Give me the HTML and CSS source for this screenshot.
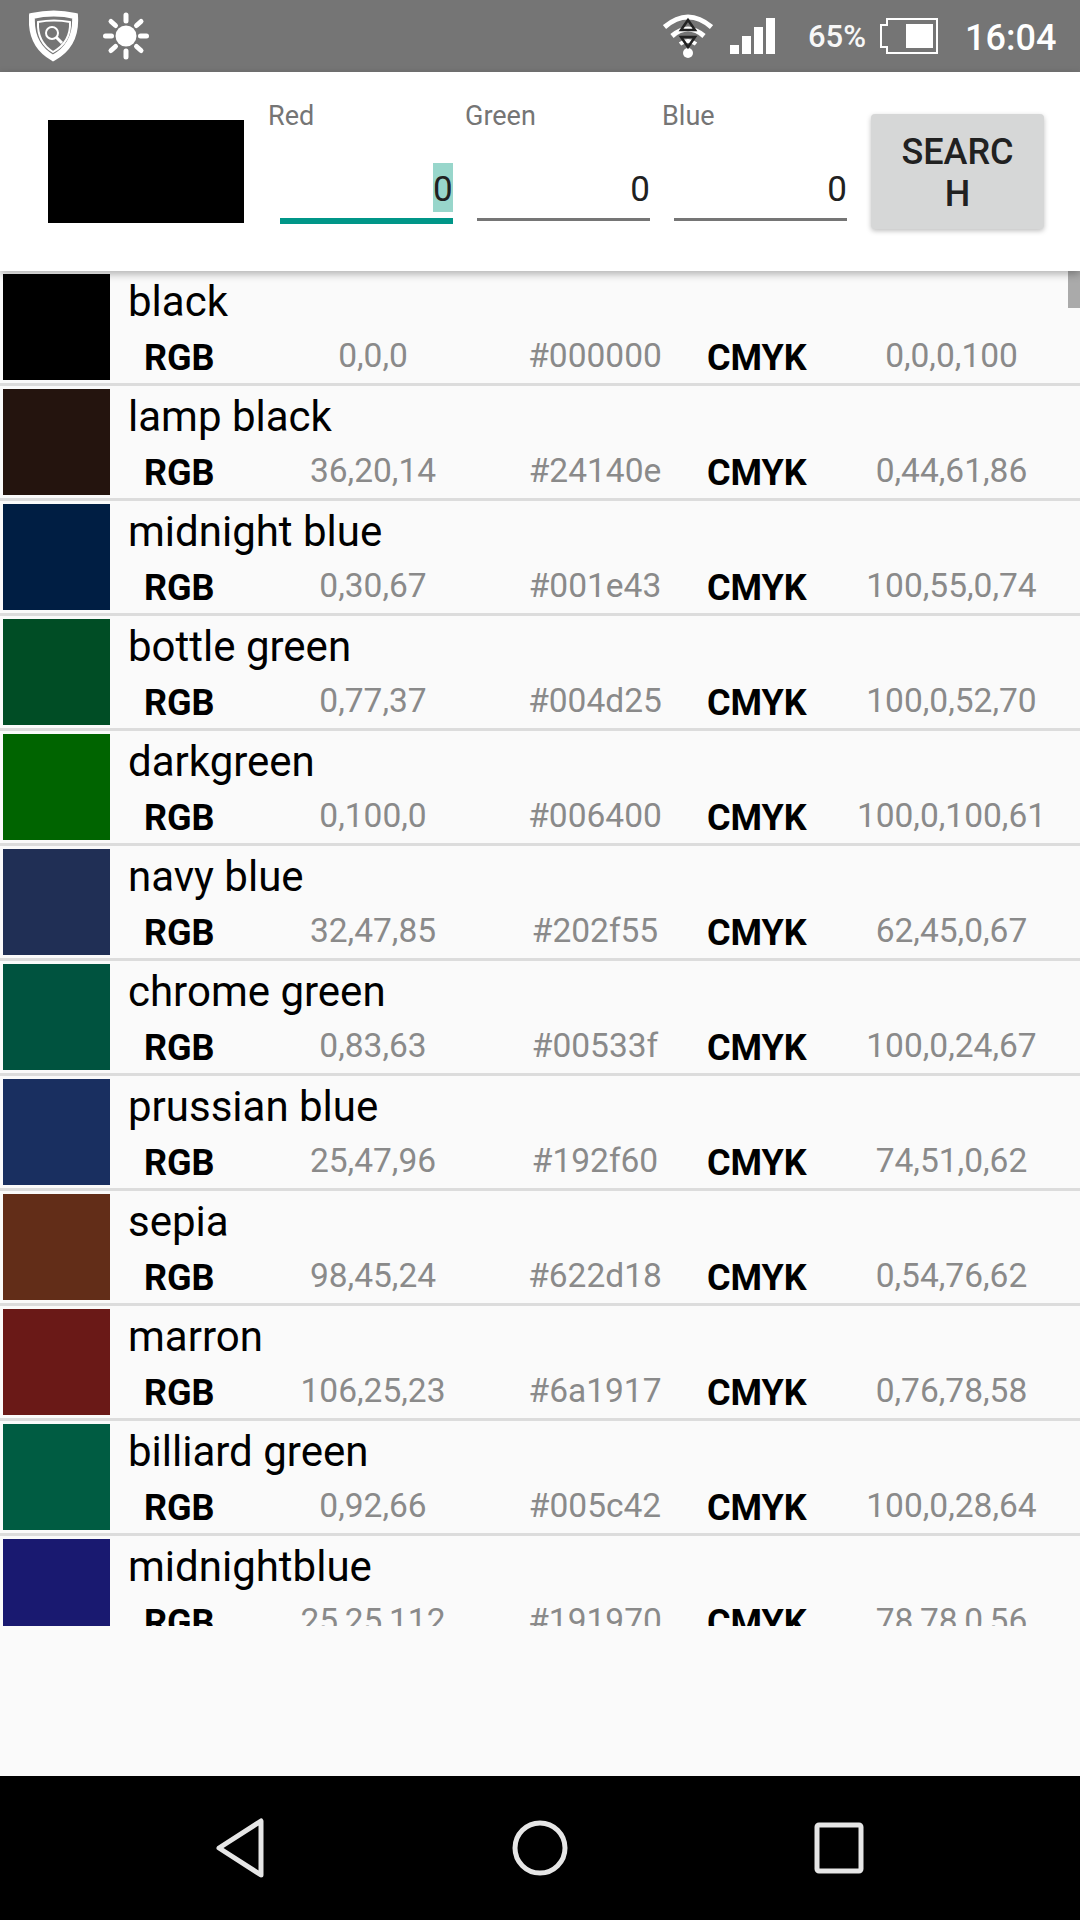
FILE: index.html
```html
<!DOCTYPE html>
<html lang="en">
<head>
<meta charset="utf-8">
<title>Colors</title>
<link rel="stylesheet" href="styles.css">
</head>
<body>
<div class="screen">
  <div class="status">
    <svg class="ic-shield" viewBox="29 0 50 72"><path class="w6" d="M32 16Q54 11 75 16Q77 45 53 58Q30 45 32 16Z"/><path class="w2" d="M38 22Q54 19 70 22Q71 42 53 52Q37 42 38 22Z"/><circle class="w2" cx="52" cy="33" r="6"/><path class="w3" d="M56.500 37.500L62 43"/></svg>
    <svg class="ic-sun" viewBox="102 0 48 72"><circle class="fill" cx="126" cy="36" r="10.500"/><path class="ray" d="M126 15v6M126 51v6M105.500 36h6M140.500 36h6M111 21.500l4.500 4M141 21.500l-4.500 4M111 50.500l4.500-4M141 50.500l-4.500-4"/></svg>
    <div class="spacer"></div>
    <svg class="ic-wifi" viewBox="664 0 50 72"><path class="w5" d="M665.500 27Q689 7 712.500 27"/><path class="w5" d="M673 36Q689 22 705 36"/><path class="w4" d="M681 44Q689 38 697 44"/><circle class="fill" cx="689" cy="53" r="5"/><path class="dk" d="M689 20L696 30H682Z"/><path class="dk" d="M682 37H696L689 47Z"/></svg>
    <svg class="ic-signal" viewBox="731 0 45 72"><path class="fill" d="M731 45h9v9h-9zM743 36h9v18h-9zM755 27h9v27h-9zM767 18h9v36h-9z"/></svg>
    <span class="pct">65%</span>
    <svg class="ic-batt" viewBox="880 0 58 72"><path class="w2" d="M887 19H937V53H887V47H881V25H887Z"/><rect class="fill" x="906" y="24" width="27" height="24"/></svg>
    <span class="time">16:04</span>
  </div>

  <header class="head">
    <div class="preview"></div>
    <div class="field">
      <div class="label">Red</div>
      <div class="input active"><span class="sel">0</span></div>
    </div>
    <div class="field">
      <div class="label">Green</div>
      <div class="input"><span>0</span></div>
    </div>
    <div class="field">
      <div class="label">Blue</div>
      <div class="input"><span>0</span></div>
    </div>
    <div class="btn">SEARC<br>H</div>
  </header>

  <main class="body">
    <div class="list">
      <div class="thumb"></div>
      <div class="row"><div class="sw c1"></div><div class="info"><div class="name">black</div><div class="vals"><b>RGB</b><span>0,0,0</span><span>#000000</span><b class="ck">CMYK</b><span>0,0,0,100</span></div></div></div>
      <div class="row"><div class="sw c2"></div><div class="info"><div class="name">lamp black</div><div class="vals"><b>RGB</b><span>36,20,14</span><span>#24140e</span><b class="ck">CMYK</b><span>0,44,61,86</span></div></div></div>
      <div class="row"><div class="sw c3"></div><div class="info"><div class="name">midnight blue</div><div class="vals"><b>RGB</b><span>0,30,67</span><span>#001e43</span><b class="ck">CMYK</b><span>100,55,0,74</span></div></div></div>
      <div class="row"><div class="sw c4"></div><div class="info"><div class="name">bottle green</div><div class="vals"><b>RGB</b><span>0,77,37</span><span>#004d25</span><b class="ck">CMYK</b><span>100,0,52,70</span></div></div></div>
      <div class="row"><div class="sw c5"></div><div class="info"><div class="name">darkgreen</div><div class="vals"><b>RGB</b><span>0,100,0</span><span>#006400</span><b class="ck">CMYK</b><span>100,0,100,61</span></div></div></div>
      <div class="row"><div class="sw c6"></div><div class="info"><div class="name">navy blue</div><div class="vals"><b>RGB</b><span>32,47,85</span><span>#202f55</span><b class="ck">CMYK</b><span>62,45,0,67</span></div></div></div>
      <div class="row"><div class="sw c7"></div><div class="info"><div class="name">chrome green</div><div class="vals"><b>RGB</b><span>0,83,63</span><span>#00533f</span><b class="ck">CMYK</b><span>100,0,24,67</span></div></div></div>
      <div class="row"><div class="sw c8"></div><div class="info"><div class="name">prussian blue</div><div class="vals"><b>RGB</b><span>25,47,96</span><span>#192f60</span><b class="ck">CMYK</b><span>74,51,0,62</span></div></div></div>
      <div class="row"><div class="sw c9"></div><div class="info"><div class="name">sepia</div><div class="vals"><b>RGB</b><span>98,45,24</span><span>#622d18</span><b class="ck">CMYK</b><span>0,54,76,62</span></div></div></div>
      <div class="row"><div class="sw c10"></div><div class="info"><div class="name">marron</div><div class="vals"><b>RGB</b><span>106,25,23</span><span>#6a1917</span><b class="ck">CMYK</b><span>0,76,78,58</span></div></div></div>
      <div class="row"><div class="sw c11"></div><div class="info"><div class="name">billiard green</div><div class="vals"><b>RGB</b><span>0,92,66</span><span>#005c42</span><b class="ck">CMYK</b><span>100,0,28,64</span></div></div></div>
      <div class="row"><div class="sw c12"></div><div class="info"><div class="name">midnightblue</div><div class="vals"><b>RGB</b><span>25,25,112</span><span>#191970</span><b class="ck">CMYK</b><span>78,78,0,56</span></div></div></div>
    </div>
  </main>

  <nav class="nav">
    <svg class="ic-back" viewBox="0 0 50 60"><path d="M45 3V57L3 30Z"/></svg>
    <svg class="ic-home" viewBox="0 0 60 60"><circle cx="30" cy="30" r="25"/></svg>
    <svg class="ic-recent" viewBox="0 0 52 54"><rect x="4" y="4" width="44" height="46" rx="2"/></svg>
  </nav>
</div>
</body>
</html>
```

FILE: styles.css
```css
* { box-sizing: border-box; }
html, body { margin: 0; padding: 0; }
body { font-family: Roboto, "Liberation Sans", sans-serif; background: #fafafa; }

.screen { width: 1080px; height: 1920px; display: flex; flex-direction: column; overflow: hidden; }

/* status bar */
.status { height: 72px; flex: none; background: #757575; display: flex; align-items: stretch; padding-left: 29px; color: #fff; }
.status svg { height: 72px; flex: none; display: block; }
.spacer { flex: 1; }
.ic-shield { width: 50px; }
.ic-sun { width: 48px; margin-left: 23px; }
.ic-wifi { width: 50px; }
.ic-signal { width: 45px; margin-left: 17px; }
.ic-batt { width: 58px; margin-left: 14px; }
.fill { fill: #fff; }
.w2, .w3, .w4, .w5, .w6, .ray { fill: none; stroke: #fff; }
.w2 { stroke-width: 2; }
.w3 { stroke-width: 3; }
.w4 { stroke-width: 4; }
.w5 { stroke-width: 5; }
.w6 { stroke-width: 6; }
.ray { stroke-width: 5; stroke-linecap: round; }
.dk { fill: none; stroke: #222; stroke-width: 2.500; }
.pct { font-size: 31px; font-weight: 500; line-height: 74px; margin-left: 33px; opacity: .95; }
.time { font-size: 36px; font-weight: 500; line-height: 76px; margin-left: 27px; width: 115px; }

/* search header */
.head { height: 199px; flex: none; background: #fff; display: flex; align-items: flex-start; padding-left: 48px; box-shadow: 0 3px 8px rgba(0,0,0,.3); position: relative; z-index: 2; }
.preview { width: 196px; height: 103px; margin-top: 48px; margin-right: 24px; background: #000; }
.field { width: 197px; padding-top: 29px; }
.label { font-size: 27px; line-height: 30px; color: #757575; }
.input { margin-left: 12px; width: 173px; height: 58px; margin-top: 32px; border-bottom: 3px solid #757575; display: flex; justify-content: flex-end; align-items: flex-start; font-size: 35px; color: #212121; }
.input span { display: block; height: 49px; line-height: 54px; }
.input.active { height: 61px; border-bottom: 6px solid #009688; }
.sel { background: #98d6cb; width: 20px; }
.btn { width: 173px; height: 115px; margin-top: 42px; margin-left: 12px; background: #d6d7d7; border-radius: 4px; box-shadow: 0 2px 5px rgba(0,0,0,.25); font-size: 36px; font-weight: 500; line-height: 42px; color: #212121; text-align: center; padding-top: 17px; }

/* list */
.body { flex: 1; background: #fafafa; min-height: 0; }
.list { height: 1355px; overflow: hidden; position: relative; }
.thumb { position: absolute; right: 0; top: 0; width: 12px; height: 37px; background: #aaa; }
.row { height: 115px; padding-top: 3px; padding-left: 3px; display: flex; border-bottom: 3px solid #dcdcdc; }
.sw { width: 107px; height: 106px; flex: none; }
.info { flex: 1; padding-left: 18px; padding-top: 5px; }
.name { font-size: 42px; line-height: 46px; color: #000; height: 46px; }
.vals { display: grid; grid-template-columns: 86px 286px 158px 156px 243px; padding-left: 16px; font-size: 33.500px; line-height: 40px; color: #8a8a8a; margin-top: 11px; }
.vals span { text-align: center; white-space: nowrap; }
.vals b { color: #000; font-size: 36px; font-weight: 700; margin-top: 2px; }
.vals b.ck { padding-left: 33px; }

.c1 { background: #000000; }
.c2 { background: #24140e; }
.c3 { background: #001e43; }
.c4 { background: #004d25; }
.c5 { background: #006400; }
.c6 { background: #202f55; }
.c7 { background: #00533f; }
.c8 { background: #192f60; }
.c9 { background: #622d18; }
.c10 { background: #6a1917; }
.c11 { background: #005c42; }
.c12 { background: #191970; }

/* nav bar */
.nav { height: 144px; flex: none; background: #000; display: flex; align-items: center; padding-left: 216px; }
.nav svg { display: block; fill: none; stroke: #e6e6e6; stroke-width: 5; stroke-linejoin: round; }
.ic-back { width: 50px; height: 60px; }
.ic-home { width: 60px; height: 60px; margin-left: 244px; }
.ic-recent { width: 52px; height: 54px; margin-left: 243px; }
```
